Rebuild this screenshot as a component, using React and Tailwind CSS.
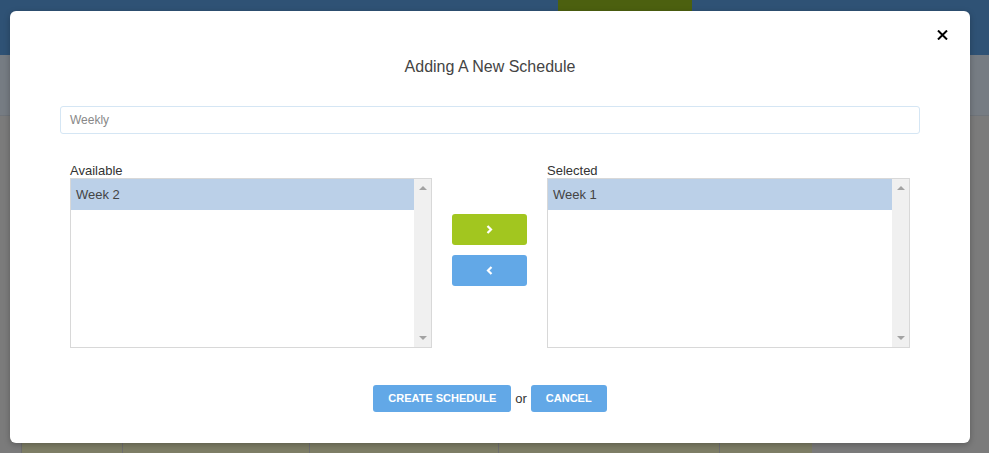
import React from "react";

function ListBox({ item }) {
  return (
    <div className="flex h-[170px] border border-[#d8d8d8] bg-white">
      <div className="flex-1">
        <div className="h-[31px] bg-[#bbd0e8] pl-[5px] text-[13px] leading-[31px] text-[#444]">{item}</div>
      </div>
      <div className="flex w-[17px] flex-col items-center justify-between bg-[#f0f0f0] py-[7px]">
        <svg width="8" height="4" viewBox="0 0 8 4"><path d="M0 4 L4 0 L8 4 Z" fill="#a3a3a3" /></svg>
        <svg width="8" height="4" viewBox="0 0 8 4"><path d="M0 0 L8 0 L4 4 Z" fill="#a3a3a3" /></svg>
      </div>
    </div>
  );
}

export default function App() {
  return (
    <div className="relative h-[453px] w-[989px] overflow-hidden bg-[#7b7b7b]" style={{ fontFamily: '"Liberation Sans", Arial, sans-serif' }}>
      <div className="flex h-[453px] flex-col">
        <div className="flex h-[55px] bg-[#2f5275]">
          <div className="ml-[558px] w-[134px] bg-[#4c600f]" />
        </div>
        <div className="h-[61px] border-b border-[#6f747a] bg-[#767c83]" />
        <div className="flex-1" />
        <div className="ml-[21px] flex h-[10px]">
          <div className="w-[101px] border-l border-[#6f6f6f] bg-[#7e7e66]" />
          <div className="w-[187px] border-l border-[#6f6f6f] bg-[#7e7e66]" />
          <div className="w-[189px] border-l border-[#6f6f6f] bg-[#7e7e66]" />
          <div className="w-[221px] border-l border-[#6f6f6f] bg-[#7e7e66]" />
          <div className="w-[93px] border-l border-[#6f6f6f] bg-[#7e7e66]" />
        </div>
      </div>

      <div className="absolute left-[10px] top-[11px] flex h-[432px] w-[960px] flex-col rounded-[6px] bg-white shadow-[0_2px_6px_rgba(0,0,0,0.25)]">
        <div className="absolute right-[22px] top-[19px]">
          <svg width="11" height="10" viewBox="0 0 11 10">
            <path d="M1 0.5 L10 9.5 M10 0.5 L1 9.5" stroke="#000" strokeWidth="2" />
          </svg>
        </div>
        <div className="mt-[47px] h-[18px] text-center text-[16px] leading-[18px] text-[#444]">Adding A New Schedule</div>
        <div className="mx-[50px] mt-[30px] flex h-[28px] items-center rounded-[3px] border border-[#d5e6f4] pl-[9px] text-[12px] text-[#888]">Weekly</div>

        <div className="mx-[60px] mt-[29px] flex">
          <div className="w-[362px]">
            <div className="h-[15px] text-[13px] leading-[15px] text-[#333]">Available</div>
            <ListBox item="Week 2" />
          </div>
          <div className="mx-[20px] flex w-[75px] flex-col gap-[10px] pt-[51px]">
            <div className="flex h-[31px] items-center justify-center rounded-[3px] bg-[#a2c61f]">
              <svg width="7" height="9" viewBox="0 0 7 9"><path d="M1.5 1 L5 4.5 L1.5 8" stroke="#fff" strokeWidth="2.2" fill="none" /></svg>
            </div>
            <div className="flex h-[31px] items-center justify-center rounded-[3px] bg-[#62a8e7]">
              <svg width="7" height="9" viewBox="0 0 7 9"><path d="M5.5 1 L2 4.5 L5.5 8" stroke="#fff" strokeWidth="2.2" fill="none" /></svg>
            </div>
          </div>
          <div className="w-[363px]">
            <div className="h-[15px] text-[13px] leading-[15px] text-[#333]">Selected</div>
            <ListBox item="Week 1" />
          </div>
        </div>

        <div className="mt-[37px] flex items-center justify-center">
          <div className="flex h-[27px] items-center rounded-[3px] bg-[#62a8e7] px-[15px] text-[11px] font-bold text-white">CREATE SCHEDULE</div>
          <div className="mx-[4px] text-[13px] text-[#333]">or</div>
          <div className="flex h-[27px] items-center rounded-[3px] bg-[#62a8e7] px-[15px] text-[11px] font-bold text-white">CANCEL</div>
        </div>
      </div>
    </div>
  );
}
